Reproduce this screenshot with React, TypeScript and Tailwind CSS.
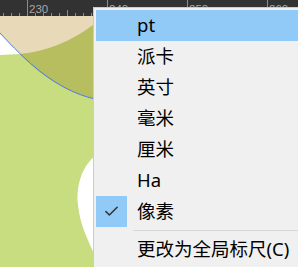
import { Check } from "lucide-react";

const units = ["pt", "派卡", "英寸", "毫米", "厘米", "Ha", "像素"];
const checked = "像素";

// tick marks every 8px, label every 80px
const ticks = Array.from({ length: 38 }, (_, i) => 3 + i * 8);
const labels = [
  { x: 27, text: "230" },
  { x: 107, text: "240" },
  { x: 187, text: "250" },
  { x: 267, text: "260" },
];

function Ruler() {
  return (
    <div className="relative h-[16px] shrink-0 bg-[#323232]">
      <svg className="absolute inset-0" width="298" height="16">
        {ticks.map((x) => {
          const major = (x - 27) % 80 === 0;
          const mid = (x - 67) % 80 === 0;
          const top = major ? 0 : mid ? 10 : 13;
          return (
            <line
              key={x}
              x1={x + 0.5}
              x2={x + 0.5}
              y1={top}
              y2={16}
              stroke="#8c8c8c"
              strokeWidth={1}
            />
          );
        })}
      </svg>
      {labels.map((l) => (
        <span
          key={l.text}
          className="absolute top-[1px] text-[11.5px] leading-[16px] text-[#a8a8a8] font-['Liberation_Sans',sans-serif]"
          style={{ left: l.x + 2 }}
        >
          {l.text}
        </span>
      ))}
    </div>
  );
}

function Artboard() {
  return (
    <div className="relative flex-1">
      <svg className="absolute inset-0" width="298" height="251" viewBox="0 16 298 251">
        <rect x="0" y="16" width="298" height="251" fill="#c8dc80" />
        {/* beige top */}
        <path d="M0,16 L130,16 L93,25 Q60,50 20,54 L0,33 Z" fill="#e8dab8" />
        <path d="M93,25 L130,0 L298,0 L298,16 L93,16 Z" fill="#e8dab8" />
        {/* white wedge */}
        <path d="M0,33 L20,54 L0,55 Z" fill="#ffffff" />
        {/* olive lens */}
        <path d="M20,54 Q60,50 93,25 L120,10 L120,100 L95,99 C55,90 25,60 20,54 Z" fill="#b6be5f" />
        {/* white blob lower right */}
        <path d="M95,156 C80,168 76,190 78,205 C80,225 88,240 95,256 Z" fill="#ffffff" />
        {/* selection path */}
        <path d="M0,33 C25,60 55,90 95,99" fill="none" stroke="#4a7cf3" strokeWidth={1} />
      </svg>
    </div>
  );
}

function UnitMenu() {
  return (
    <div className="absolute left-[93px] top-[7px] w-[220px] border border-[#cccccc] bg-[#f0f0f0] p-[2px] font-['Noto_Sans','Noto_Sans_CJK_SC',sans-serif] text-[18.5px] text-black">
      {units.map((u, i) => (
        <div
          key={u}
          className={`flex h-[31px] items-center ${i === 0 ? "bg-[#91c9f7]" : ""}`}
        >
          <div
            className={`flex h-[31px] w-[31px] items-center justify-center ${
              u === checked ? "bg-[#91c9f7]" : ""
            }`}
          >
            {u === checked && <Check className="h-[17px] w-[17px] text-[#333333]" strokeWidth={2.2} />}
          </div>
          <span className="ml-[10px] leading-none">{u}</span>
        </div>
      ))}
      <div className="my-[3px] ml-[37px] h-px bg-[#d7d7d7]" />
      <div className="flex h-[31px] items-center">
        <div className="w-[31px]" />
        <span className="ml-[10px] leading-none">更改为全局标尺(C)</span>
      </div>
    </div>
  );
}

export default function App() {
  return (
    <div className="relative flex h-[267px] w-[298px] flex-col overflow-hidden">
      <Ruler />
      <Artboard />
      <UnitMenu />
    </div>
  );
}
